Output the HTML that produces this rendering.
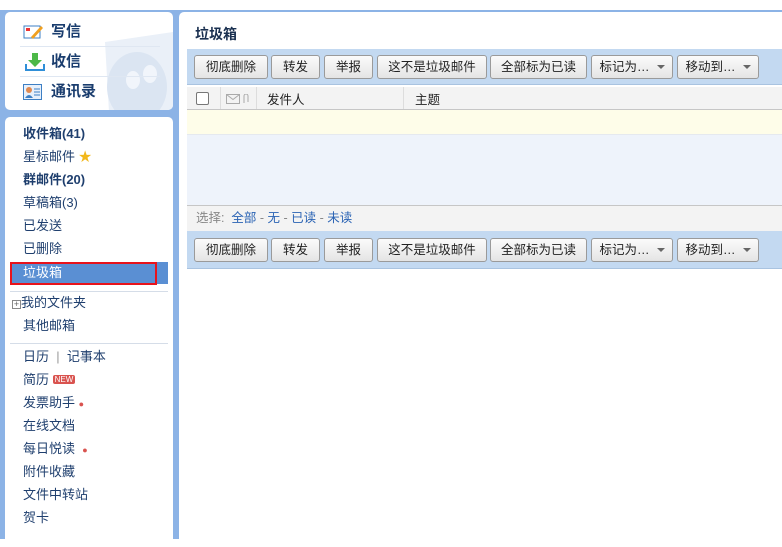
<!DOCTYPE html>
<html><head><meta charset="utf-8"><style>
*{margin:0;padding:0;box-sizing:border-box}
body{width:782px;height:539px;overflow:hidden;background:#fff;font-family:"Liberation Sans","Noto Sans CJK SC",sans-serif;font-size:12px;color:#1f3a63;position:relative}
.bg{position:absolute;left:0;top:10px;width:782px;height:529px;background:#8cb3e6}
.box{position:absolute;background:#fff;border-radius:5px}
.top{left:5px;top:12px;width:168px;height:98px;overflow:hidden}
.top .it{position:absolute;left:18px;height:28px;font-size:15px;font-weight:bold;color:#1a3d6e;line-height:28px;padding-left:28px}
.top .sep{position:absolute;left:15px;width:140px;height:1px;background:#dfe7f2}
.nav{left:5px;top:117px;width:168px;height:430px}
.nav .i{position:absolute;left:18px;font-size:13px;line-height:16px;color:#1f3f6e}
.b{font-weight:bold}
.hr{position:absolute;left:5px;width:158px;height:1px;background:#d5dde8}
.main{left:179px;top:12px;width:610px;height:530px;border-radius:5px 0 0 0}
.title{position:absolute;left:16px;top:12px;font-size:14px;font-weight:bold;color:#1a3050}
.tb{position:absolute;left:8px;width:600px;height:36px;background:#c3d9f1;border-bottom:1px solid #a9c3e0}
.btn{position:absolute;top:6px;height:24px;border:1px solid #9a9a9a;border-radius:3px;background:linear-gradient(#fbfbfb,#e4e4e4);font-size:12.5px;color:#222;text-align:center;line-height:22px}
.arr{display:inline-block;border:4px solid transparent;border-top:4px solid #666;margin-left:7px;vertical-align:-2px}
</style></head><body>
<div class="bg"></div>
<div class="box top">
 <svg style="position:absolute;left:90px;top:20px" width="80" height="80" viewBox="0 0 80 80"><path d="M10 10 L78 0 L78 80 L14 80 Z" fill="#eaf0f8"/><ellipse cx="42" cy="55" rx="30" ry="35" fill="#dbe5f2"/><ellipse cx="38" cy="48" rx="7" ry="9" fill="#f1f5fb"/><ellipse cx="55" cy="42" rx="7" ry="9" fill="#f1f5fb"/></svg>
 <div class="it" style="top:6px">写信</div>
 <svg style="position:absolute;left:18px;top:12px" width="20" height="16"><rect x="1" y="2" width="16" height="12" fill="#fff" stroke="#3d7fc4"/><rect x="3" y="4" width="4" height="3" fill="#e33"/><path d="M8 13 L18 2 L20 4 L10 15 Z" fill="#f0a020"/></svg>
 <div class="sep" style="top:34px"></div>
 <div class="it" style="top:36px">收信</div>
 <svg style="position:absolute;left:20px;top:40px" width="20" height="20"><path d="M7 1h6v7h4l-7 7-7-7h4z" fill="#4cb848"/><path d="M1 12v6h18v-6" fill="none" stroke="#2f8fd8" stroke-width="2"/></svg>
 <div class="sep" style="top:64px"></div>
 <div class="it" style="top:66px">通讯录</div>
 <svg style="position:absolute;left:18px;top:72px" width="19" height="16"><rect x=".5" y=".5" width="18" height="15" fill="#e7f0fb" stroke="#3d7fc4"/><circle cx="6" cy="6" r="3" fill="#e08a50"/><path d="M2 14q4-6 8 0z" fill="#3d7fc4"/><path d="M11 5h6M11 8h6M11 11h6" stroke="#3d7fc4"/></svg>
</div>
<div class="box nav">
 <div class="i b" style="top:9px">收件箱(41)</div>
 <div class="i" style="top:32px">星标邮件 <span style="color:#f2b81c">★</span></div>
 <div class="i b" style="top:55px">群邮件(20)</div>
 <div class="i" style="top:78px">草稿箱(3)</div>
 <div class="i" style="top:101px">已发送</div>
 <div class="i" style="top:124px">已删除</div>
 <div style="position:absolute;left:5px;top:145px;width:158px;height:22px;background:#5a8fd3"></div>
 <div style="position:absolute;left:5px;top:145px;width:147px;height:23px;border:2px solid #e8131b"></div>
 <div class="i" style="top:148px;color:#fff">垃圾箱</div>
 <div class="hr" style="top:174px"></div>
 <div class="i" style="top:178px;left:7px"><span style="display:inline-block;width:9px;height:9px;border:1px solid #888;font-size:9px;line-height:7px;text-align:center;color:#666;vertical-align:0">+</span>我的文件夹</div>
 <div class="i" style="top:201px">其他邮箱</div>
 <div class="hr" style="top:226px"></div>
 <div class="i" style="top:232px">日历 &nbsp;<span style="color:#999">|</span>&nbsp; 记事本</div>
 <div class="i" style="top:255px">简历 <span style="background:#d9534f;color:#fff;font-size:8px;padding:0 2px;border-radius:2px;vertical-align:2px">NEW</span></div>
 <div class="i" style="top:278px">发票助手 <span style="color:#d9534f;font-size:9px">●</span></div>
 <div class="i" style="top:301px">在线文档</div>
 <div class="i" style="top:324px">每日悦读 &nbsp;<span style="color:#d9534f;font-size:9px">●</span></div>
 <div class="i" style="top:347px">附件收藏</div>
 <div class="i" style="top:370px">文件中转站</div>
 <div class="i" style="top:393px">贺卡</div>
</div>
<div class="box main">
 <div class="title">垃圾箱</div>
 <div class="tb" style="top:37px">
  <div class="btn" style="left:7px;width:74px">彻底删除</div><div class="btn" style="left:84px;width:49px">转发</div><div class="btn" style="left:137px;width:49px">举报</div><div class="btn" style="left:190px;width:110px">这不是垃圾邮件</div><div class="btn" style="left:303px;width:97px">全部标为已读</div><div class="btn" style="left:404px;width:82px">标记为…<span class="arr"></span></div><div class="btn" style="left:490px;width:82px">移动到…<span class="arr"></span></div>
 </div>
 <div style="position:absolute;left:8px;top:75px;width:600px;height:23px;background:#f3f3f3;border-bottom:1px solid #c6c6c6">
  <div style="position:absolute;left:9px;top:5px;width:13px;height:13px;border:1px solid #777;border-radius:2px;background:#fff"></div>
  <div style="position:absolute;left:33px;top:0;width:1px;height:22px;background:#ddd"></div>
  <svg style="position:absolute;left:39px;top:7px" width="24" height="10"><rect x=".5" y=".5" width="13" height="9" fill="none" stroke="#aaa"/><path d="M.5 .5l6.5 5 6.5-5" fill="none" stroke="#aaa"/><path d="M18 9V2a2 2 0 014 0v6" fill="none" stroke="#aaa"/></svg>
  <div style="position:absolute;left:69px;top:0;width:1px;height:22px;background:#ddd"></div>
  <div style="position:absolute;left:80px;top:2px;font-size:12.5px;color:#222">发件人</div>
  <div style="position:absolute;left:216px;top:0;width:1px;height:22px;background:#ddd"></div>
  <div style="position:absolute;left:228px;top:2px;font-size:12.5px;color:#222">主题</div>
 </div>
 <div style="position:absolute;left:8px;top:98px;width:600px;height:25px;background:#fefde9;border-bottom:1px solid #e5e9ef"></div>
 <div style="position:absolute;left:8px;top:123px;width:600px;height:71px;background:#eef3fb;border-bottom:1px solid #c6c6c6"></div>
 <div style="position:absolute;left:8px;top:194px;width:600px;height:25px;background:#f3f3f3;font-size:12.5px;line-height:25px;padding-left:9px;color:#888">选择: &nbsp;<span style="color:#2a63b4">全部</span> - <span style="color:#2a63b4">无</span> - <span style="color:#2a63b4">已读</span> - <span style="color:#2a63b4">未读</span></div>
 <div class="tb" style="top:219px;height:38px">
  <div class="btn" style="left:7px;width:74px;top:7px">彻底删除</div><div class="btn" style="left:84px;width:49px;top:7px">转发</div><div class="btn" style="left:137px;width:49px;top:7px">举报</div><div class="btn" style="left:190px;width:110px;top:7px">这不是垃圾邮件</div><div class="btn" style="left:303px;width:97px;top:7px">全部标为已读</div><div class="btn" style="left:404px;width:82px;top:7px">标记为…<span class="arr"></span></div><div class="btn" style="left:490px;width:82px;top:7px">移动到…<span class="arr"></span></div>
 </div>
</div>
</body></html>
